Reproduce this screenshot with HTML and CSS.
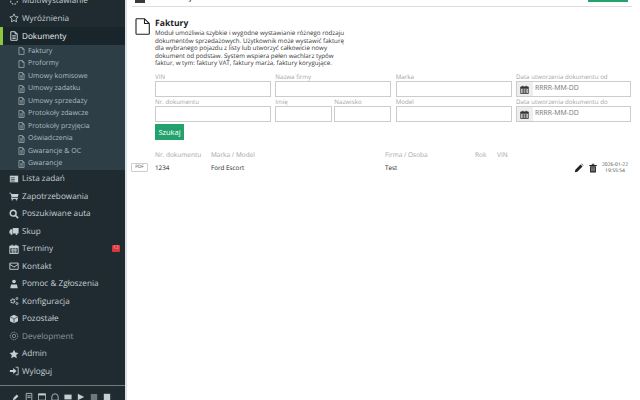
FILE: index.html
```html
<!DOCTYPE html>
<html lang="pl">
<head>
<meta charset="utf-8">
<title>Faktury</title>
<link rel="stylesheet" href="styles.css">
</head>
<body>
<svg class="defs" width="0" height="0" aria-hidden="true">
<defs>
<symbol id="file" viewBox="0 0 12 14"><path d="M1.5 1h6l3 3v9h-9z M7.5 1v3h3" fill="none" stroke="currentColor" stroke-width="1.2"/></symbol>
<symbol id="filetext" viewBox="0 0 12 14"><path d="M1.5 1h6l3 3v9h-9z M7.5 1v3h3" fill="none" stroke="currentColor" stroke-width="1.2"/><path d="M3.5 6.5h5M3.5 8.5h5M3.5 10.5h5" stroke="currentColor" stroke-width="1"/></symbol>
<symbol id="cal" viewBox="0 0 12 12"><path d="M1 2.500h10v9H1z" fill="none" stroke="currentColor" stroke-width="1.2"/><path d="M1 2.500h10V5H1zM3 1h1.400v2.500H3zM7.600 1H9v2.500H7.600z" fill="currentColor"/><path d="M2.500 6.500h7M2.500 8h7M2.500 9.700h7M4.500 5v6M7.500 5v6" stroke="currentColor" stroke-width=".8"/></symbol>
</defs>
</svg>
<div class="page">
<aside class="sidebar">
<nav class="menu">
<a class="item"><svg class="ic" viewBox="0 0 12 12"><circle cx="6" cy="6" r="4" fill="none" stroke="currentColor" stroke-width="1.300" stroke-dasharray="2 1.500"/></svg>Multiwystawianie</a>
<a class="item"><svg class="ic" viewBox="0 0 12 12"><path d="M6 1l1.500 3.300 3.500.4-2.600 2.400.7 3.500L6 8.900l-3.100 1.700.7-3.500L1 4.700l3.500-.4z" fill="none" stroke="currentColor"/></svg>Wyróżnienia</a>
<a class="item active"><svg class="ic" viewBox="0 0 12 14"><use href="#filetext"/></svg>Dokumenty</a>
<div class="submenu">
<a class="sub"><svg class="sic"><use href="#file"/></svg>Faktury</a>
<a class="sub"><svg class="sic"><use href="#file"/></svg>Proformy</a>
<a class="sub"><svg class="sic"><use href="#filetext"/></svg>Umowy komisowe</a>
<a class="sub"><svg class="sic"><use href="#filetext"/></svg>Umowy zadatku</a>
<a class="sub"><svg class="sic"><use href="#filetext"/></svg>Umowy sprzedaży</a>
<a class="sub"><svg class="sic"><use href="#filetext"/></svg>Protokoły zdawcze</a>
<a class="sub"><svg class="sic"><use href="#filetext"/></svg>Protokoły przyjęcia</a>
<a class="sub"><svg class="sic"><use href="#filetext"/></svg>Oświadczenia</a>
<a class="sub"><svg class="sic"><use href="#filetext"/></svg>Gwarancje &amp; OC</a>
<a class="sub"><svg class="sic"><use href="#filetext"/></svg>Gwarancje</a>
</div>
<a class="item"><svg class="ic" viewBox="0 0 12 12"><path d="M1 2h10v8H1z" fill="currentColor"/><path d="M2 4.500h5M2 6.500h5M2 8.500h5" stroke="#1f2b31" stroke-width=".8"/></svg>Lista zadań</a>
<a class="item"><svg class="ic" viewBox="0 0 12 12"><path d="M.5 2h2l.5 1.500h8.500l-1 4H4l-.3 1h7v1H2.500l.6-2.200L2 3H.5z" fill="currentColor"/><circle cx="4" cy="10.500" r="1" fill="currentColor"/><circle cx="9" cy="10.500" r="1" fill="currentColor"/></svg>Zapotrzebowania</a>
<a class="item"><svg class="ic" viewBox="0 0 12 12"><circle cx="5" cy="5" r="3.500" fill="none" stroke="currentColor" stroke-width="1.800"/><path d="M7.500 7.500l3.500 3.500" stroke="currentColor" stroke-width="2"/></svg>Poszukiwane auta</a>
<a class="item"><svg class="ic" viewBox="0 0 12 12"><path d="M4.500 2.500h7v6.500h-7zM4 4H2L.5 6v3H4z" fill="currentColor"/><circle cx="3" cy="9.500" r="1.200" fill="currentColor"/><circle cx="9" cy="9.500" r="1.200" fill="currentColor"/></svg>Skup</a>
<a class="item"><svg class="ic" viewBox="0 0 12 12"><use href="#cal"/></svg>Terminy<span class="badge">12</span></a>
<a class="item"><svg class="ic" viewBox="0 0 12 12"><path d="M1 2.500h10v7.500H1z M1 4l5 3.300L11 4" fill="none" stroke="currentColor" stroke-width="1.100"/></svg>Kontakt</a>
<a class="item"><svg class="ic" viewBox="0 0 12 12"><circle cx="6" cy="3" r="2.200" fill="currentColor"/><path d="M1.500 11l1-4.500h7l1 4.500z" fill="currentColor"/></svg>Pomoc &amp; Zgłoszenia</a>
<a class="item"><svg class="ic" viewBox="0 0 12 12"><circle cx="4.500" cy="6" r="2.200" fill="none" stroke="currentColor" stroke-width="1.800" stroke-dasharray="1.400 .6"/><circle cx="9.500" cy="3" r="1.200" fill="none" stroke="currentColor"/><circle cx="9.500" cy="9" r="1.200" fill="none" stroke="currentColor"/></svg>Konfiguracja</a>
<a class="item"><svg class="ic" viewBox="0 0 12 12"><path d="M6 1l4.800 2.300v5.400L6 11 1.200 8.700V3.300z" fill="currentColor"/><path d="M1.500 3.500L6 6l4.500-2.500M6 6v5" stroke="#1f2b31" stroke-width=".8" fill="none"/></svg>Pozostałe</a>
<a class="item dim"><svg class="ic" viewBox="0 0 12 12"><circle cx="6" cy="6" r="4.500" fill="none" stroke="currentColor" stroke-width="1.200" stroke-dasharray="1.500 .8"/><circle cx="6" cy="6" r="2" fill="none" stroke="currentColor"/></svg>Development</a>
<a class="item"><svg class="ic" viewBox="0 0 12 12"><path d="M6 .8l1.600 3.500 3.800.4-2.800 2.600.8 3.800L6 9.200l-3.400 1.900.8-3.800L.6 4.700l3.800-.4z" fill="currentColor"/></svg>Admin</a>
<a class="item"><svg class="ic" viewBox="0 0 12 12"><path d="M1 4.800h4V2.500L9 6l-4 3.500V7.200H1z" fill="currentColor"/><path d="M8 1.500h3v9H8" fill="none" stroke="currentColor"/></svg>Wyloguj</a>
</nav>
<div class="tools">
<svg viewBox="0 0 10 10"><path d="M1 9l1-3 4-4 2 2-4 4z" fill="currentColor"/></svg>
<svg viewBox="0 0 10 10"><path d="M1.500.5h7v9h-7zM3 3.500h4M3 5.500h4" fill="none" stroke="currentColor"/></svg>
<svg viewBox="0 0 10 10"><path d="M.5 1h9v8h-9z" fill="none" stroke="currentColor"/><path d="M.5 1h9v2h-9z" fill="currentColor"/></svg>
<svg viewBox="0 0 10 10"><path d="M1 9V5a4 4 0 0 1 8 0v4z" fill="none" stroke="currentColor"/></svg>
<svg viewBox="0 0 10 10"><path d="M.5 2h9v6h-9z" fill="currentColor"/></svg>
<svg viewBox="0 0 10 10"><path d="M1 1l8 4-8 4z" fill="currentColor"/></svg>
<svg viewBox="0 0 10 10"><path d="M1 2.500h8M1 5h8M1 7.500h8" stroke="currentColor" stroke-width="1.200"/></svg>
<svg viewBox="0 0 10 10"><path d="M1 1h8v8H1z" fill="currentColor"/></svg>
</div>
</aside>
<main class="main">
<header class="topbar">
<svg class="topicon" viewBox="0 0 10 3"><path d="M0 0h10v3H0z" fill="#3a3a3a"/></svg>
<span class="toptitle">Faktury</span>
<span class="topbtn"></span>
</header>
<section class="intro">
<svg class="bigfile" viewBox="0 0 15 17"><path d="M1 1.500q0-.8.800-.8h7.700l4.800 4.800v10q0 .8-.8.800H1.800q-.8 0-.8-.8z M9.500.7v4.800h4.800" fill="none" stroke="#222" stroke-width="1.100"/></svg>
<div>
<h1>Faktury</h1>
<p>Moduł umożliwia szybkie i wygodne wystawianie różnego rodzaju dokumentów sprzedażowych. Użytkownik może wystawić fakturę dla wybranego pojazdu z listy lub utworzyć całkowicie nowy dokument od podstaw. System wspiera pełen wachlarz typów faktur, w tym: faktury VAT, faktury marża, faktury korygujące.</p>
</div>
</section>
<form class="filters">
<label class="f">VIN<input></label>
<label class="f">Nazwa firmy<input></label>
<label class="f">Marka<input></label>
<label class="f">Data utworzenia dokumentu od<span class="date"><span class="addon"><svg viewBox="0 0 12 12"><use href="#cal"/></svg></span><span class="ph">RRRR-MM-DD</span></span></label>
<label class="f">Nr. dokumentu<input></label>
<div class="pair">
<label class="f">Imię<input></label>
<label class="f">Nazwisko<input></label>
</div>
<label class="f">Model<input></label>
<label class="f">Data utworzenia dokumentu do<span class="date"><span class="addon"><svg viewBox="0 0 12 12"><use href="#cal"/></svg></span><span class="ph">RRRR-MM-DD</span></span></label>
</form>
<button class="search" type="button">Szukaj</button>
<div class="table">
<div class="thead">
<span class="col-pdf"></span><span class="col-nr">Nr. dokumentu</span><span class="col-model">Marka / Model</span><span class="col-firm">Firma / Osoba</span><span class="col-year">Rok</span><span class="col-vin">VIN</span>
</div>
<div class="trow">
<span class="col-pdf"><span class="pdf">PDF</span></span><span class="col-nr">1234</span><span class="col-model">Ford Escort</span><span class="col-firm">Test</span><span class="col-year"></span><span class="col-vin"></span>
<span class="acts">
<svg viewBox="0 0 12 12"><path d="M1 11l.6-3L7.800 1.800l2.400 2.400L4 10.400zM8.600 1l.6-.4 2.200 2.200-.4.600z" fill="#222"/></svg>
<svg viewBox="0 0 12 12"><path d="M1.500 2.500h9v1h-9zM4.500 1h3v1h-3zM2.500 4h7v7.500h-7z" fill="#222"/><path d="M4.500 5v5M6 5v5M7.500 5v5" stroke="#fff" stroke-width=".6"/></svg>
<span class="stamp">2026-01-22<br>19:55:54</span>
</span>
</div>
</div>
</main>
</div>
</body>
</html>
```
FILE: styles.css
```css
* { box-sizing: border-box; }
html, body { margin: 0; height: 400px; overflow: hidden; background: #fff; }
body { font-family: "Open Sans", "Liberation Sans", sans-serif; color: #222; text-rendering: geometricPrecision; }
.defs { position: absolute; }
.page { display: flex; height: 400px; overflow: hidden; }
.sidebar { width: 125px; flex: none; height: 400px; background: #1f2b31; overflow: hidden; color: #c6ced1; }
.menu { display: flex; flex-direction: column; margin-top: -8px; }
.item { display: flex; align-items: center; height: 17.5px; font-size: 8.2px; color: #c6ced1; padding-left: 9px; position: relative; white-space: nowrap; }
.ic { width: 10px; height: 10px; margin-right: 3px; flex: none; }
.active { background: #18252b; color: #e8ecee; height: 18px; box-shadow: inset 3px 0 0 #8cc63f; }
.dim { color: #8b979c; }
.submenu { background: #2d3e46; display: flex; flex-direction: column; }
.sub { display: flex; align-items: center; height: 12.5px; font-size: 7px; color: #b0bdc2; padding-left: 18px; white-space: nowrap; }
.sic { width: 7px; height: 8px; margin-right: 3px; flex: none; }
.badge { position: absolute; right: 5px; top: 5px; background: #d9363e; color: #f4d5d6; font-size: 5px; line-height: 7px; width: 8px; text-align: center; border-radius: 1px; }
.tools { display: flex; gap: 5px; margin-top: 5px; padding: 6px 0 0 12px; border-top: 1px solid #6f7a7f; color: #c6ced1; }
.tools svg { width: 8px; height: 10px; flex: none; }
.main { flex: 1; min-width: 0; border-left: 2px solid #dbe3e8; height: 400px; overflow: hidden; padding: 0 8px 0 5px; }
.topbar { display: flex; align-items: flex-end; height: 7px; border-bottom: 1px solid #ddd; position: relative; }
.topicon { width: 10px; height: 3px; margin: 0 0 3px 3px; align-self: flex-start; }
.toptitle { font-size: 11px; line-height: 11px; height: 2px; overflow: hidden; margin: 0 0 3px 10px; color: #333; align-self: flex-start; display: flex; align-items: flex-end; }
.topbtn { margin-left: auto; width: 40px; height: 2px; margin-right: 4px; align-self: flex-start; background: #23a26d; }
.intro { display: flex; margin: 11px 0 0 3px; }
.bigfile { width: 15px; height: 17px; flex: none; margin: 0 5px 0 0; }
h1 { font-size: 8.6px; line-height: 10px; font-weight: 700; margin: 0 0 1px; color: #222; }
.intro p { margin: 0; font-size: 6.24px; line-height: 7.5px; width: 193px; color: #333; }
.filters { display: grid; grid-template-columns: 116px 116px 116px 115px; column-gap: 4.33px; row-gap: 1px; margin: 6.5px 0 0 23px; }
.f { display: flex; flex-direction: column; font-size: 6.2px; line-height: 8px; color: #a5a5a5; white-space: nowrap; }
.f input, .date { height: 16px; border: 1px solid #ccc; background: #fff; width: 100%; padding: 0; margin: 0; display: flex; align-items: stretch; }
.pair { display: grid; grid-template-columns: 57px 57px; column-gap: 2px; }
.addon { width: 16px; background: #eee; display: flex; align-items: center; justify-content: center; color: #333; }
.addon svg { width: 9px; height: 9px; }
.ph { font-size: 6.9px; line-height: 14px; color: #777; padding-left: 2px; }
.search { display: block; margin: 2px 0 0 23px; width: 29px; height: 16px; background: #23a26d; color: #fff; border: 0; padding: 0; font: 7.5px "Open Sans", sans-serif; }
.table { margin: 10px 0 0 -1px; }
.thead, .trow { display: flex; align-items: center; font-size: 6.5px; }
.thead { color: #a5a5a5; height: 9px; }
.trow { height: 17px; color: #222; font-size: 6.3px; font-weight: 500; }
.col-pdf { width: 24px; flex: none; }
.col-nr { width: 56px; flex: none; }
.col-model { width: 174px; flex: none; }
.col-firm { width: 90px; flex: none; }
.col-year { width: 22px; flex: none; }
.col-vin { width: 40px; flex: none; }
.pdf { display: block; width: 17px; height: 9px; border: 1px solid #ccc; border-radius: 1px; font-size: 4.5px; font-weight: 400; line-height: 7px; text-align: center; color: #444; }
.acts { margin: 0 4px 0 auto; display: flex; align-items: center; gap: 4px; }
.acts svg { width: 10px; height: 10px; }
.stamp { font-size: 5px; font-weight: 400; line-height: 6px; text-align: center; color: #444; width: 26px; white-space: nowrap; }
```
